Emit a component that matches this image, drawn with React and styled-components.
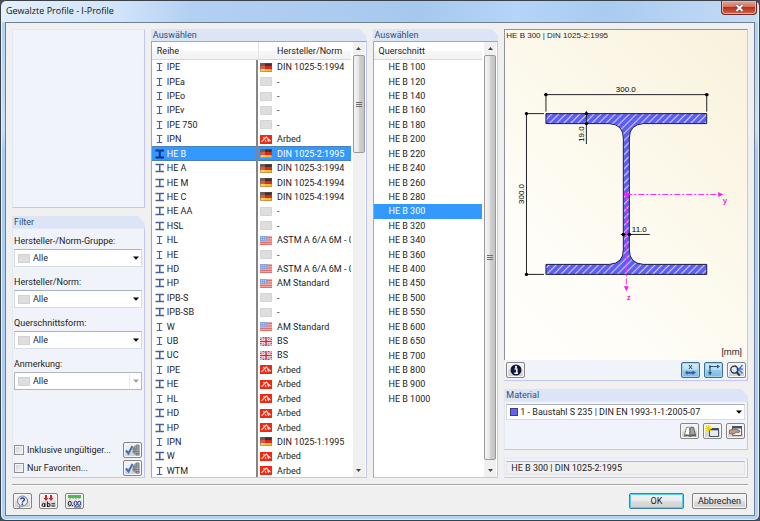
import React from "react";
import styled, { createGlobalStyle, css } from "styled-components";

const GlobalStyle = createGlobalStyle`
  *, *::before, *::after { box-sizing: border-box; }
  body { margin: 0; background: #474d55; }
  body, button, select, input, table {
    font-family: Roboto, "Liberation Sans", sans-serif;
    font-size: 9px;
    line-height: 12px;
    color: #1b1b1b;
  }
`;

/* ---------- window frame ---------- */

const Window = styled.div`
  display: flex;
  flex-direction: column;
  height: 100vh;
  min-height: 480px;
  padding: 0 4px 4px;
  border: 1px solid #3b4148;
  border-radius: 6px;
  background: linear-gradient(180deg, #c3dcf6 0, #b4d2f3 28px, #c8e0fa 130px, #a9cdf3 150px, #b2d3f6 100%);
  box-shadow: inset 0 0 0 1px #e3f0fc;
`;

const TitleBar = styled.header`
  display: flex;
  flex: none;
  justify-content: space-between;
  align-items: flex-start;
  height: 21px;
  margin: 0 -3px;
  padding: 0 1px 0 4px;
  background: linear-gradient(90deg, #e4f0fc 0, #cfe3f9 16%, #b3d0f2 25%, #a7c8ee 55%, #b4d5f8 68%, #a9cbf0 80%, #c5dcf5 100%);
  border-radius: 5px 5px 0 0;
`;

const Title = styled.h1`
  margin: 0;
  font: 9px/20px "Open Sans", "Noto Sans", sans-serif;
  color: #111;
`;

const CloseButton = styled.button`
  display: grid;
  place-items: center;
  width: 36px;
  height: 14px;
  padding: 0;
  border: 1px solid #6b2a2a;
  border-top: 0;
  border-radius: 0 0 4px 4px;
  background: linear-gradient(#e3a396 0, #d4705f 46%, #b8301c 50%, #d2644a 100%);
  box-shadow: inset 0 0 0 1px #eab5aa;
`;

const Client = styled.div`
  display: flex;
  flex: 1;
  flex-direction: column;
  min-height: 0;
  padding: 6px;
  border: 1px solid #6f7f92;
  background: #f0f0f0;
`;

const Columns = styled.main`
  display: grid;
  flex: 1;
  grid-template-columns: minmax(0, 133fr) minmax(0, 216fr) minmax(0, 126fr) minmax(0, 244fr);
  gap: 6px;
  min-height: 0;
`;

const Column = styled.div`
  display: flex;
  flex-direction: column;
  gap: 8px;
  min-width: 0;
  min-height: 0;
`;

/* ---------- grouped panels ---------- */

const Panel = styled.section`
  display: flex;
  flex-direction: column;
  flex: ${(p) => p.$flex || "none"};
  min-height: 0;
`;

const PanelHeader = styled.h2`
  flex: none;
  margin: 0;
  height: 12px;
  padding: 0 2px;
  font-size: 9px;
  font-weight: 400;
  line-height: 12px;
  color: #2f4f78;
  background: #dbe5f5;
  clip-path: polygon(0 0, calc(100% - 7px) 0, 100% 7px, 100% 100%, 0 100%);
`;

const PanelBody = styled.div`
  display: flex;
  flex: 1;
  flex-direction: column;
  min-height: 0;
  padding: ${(p) => p.$pad || "0"};
  border: 1px solid #e2e8f6;
  border-right: 1px solid #c3c5f6;
  border-bottom: 1px solid #c3c5f6;
  background: #f0f3f9;
`;

/* ---------- controls ---------- */

const FieldLabel = styled.label`
  display: block;
  margin: ${(p) => (p.$first ? 6 : 9)}px 0 2px;
`;

const SelectBox = styled.div`
  display: flex;
  flex: none;
  align-items: center;
  gap: ${(p) => (p.$tight ? 2 : 3)}px;
  height: ${(p) => (p.$tight ? 16 : 18)}px;
  padding: 0 1px 0 3px;
  border: 1px solid #d9dde3;
  border-top-color: #adb2ba;
  background: #fff;
  ${(p) => p.$disabled && css`border-color: #b4b7bd;`}
`;

const NativeSelect = styled.select`
  flex: 1;
  min-width: 0;
  height: 100%;
  padding: 0;
  border: 0;
  outline: 0;
  background: transparent;
  appearance: none;
  opacity: 1;
  color: #1b1b1b;
  &:disabled { border-right: 1px solid #ececec; }
`;

const Swatch = styled.span`
  flex: none;
  width: ${(p) => (p.$color ? 8 : 12)}px;
  height: ${(p) => (p.$color ? 8 : 9)}px;
  border: 1px solid ${(p) => (p.$color ? "#3c3c8c" : "#d2d2d2")};
  background: ${(p) => p.$color || "#dedede"};
`;

const CheckRow = styled.div`
  display: flex;
  align-items: center;
  justify-content: space-between;
  margin-top: 2px;
`;

const CheckLabel = styled.label`
  display: flex;
  align-items: center;
  gap: 3px;
  white-space: nowrap;
`;

const CheckBox = styled.input`
  width: 10px;
  height: 10px;
  margin: 0;
  appearance: none;
  border: 1px solid #8e8f8f;
  background: linear-gradient(135deg, #cfd3d8, #f6f6f6);
  box-shadow: inset 0 0 0 1px #f4f4f4;
`;

const IconButton = styled.button`
  display: grid;
  flex: none;
  place-items: center;
  width: 19px;
  height: 16px;
  padding: 0;
  border: 1px solid #858585;
  border-radius: 2px;
  background: linear-gradient(#f4f4f4 0, #ebebeb 48%, #dcdcdc 52%, #d0d0d0 100%);
  box-shadow: inset 0 0 0 1px #f8f8f8;
  ${(p) => p.$active && css`
    border-color: #3f6f8d;
    background: linear-gradient(#d6ecf8 0, #b4ddf3 48%, #94cdec 52%, #79bbe0 100%);
    box-shadow: inset 0 0 0 1px #a9d3ea;
  `}
`;

const PushButton = styled.button`
  width: 55px;
  height: 16px;
  padding: 0;
  line-height: 12px;
  border: 1px solid #808080;
  border-radius: 2px;
  background: linear-gradient(#f3f3f3 0, #ebebeb 48%, #dddddd 52%, #cfcfcf 100%);
  box-shadow: inset 0 0 0 1px #f8f8f8;
  ${(p) => p.$default && css`
    border-color: #3c7fb1;
    box-shadow: inset 0 0 0 1px #4fd2f5;
  `}
`;

const ButtonRow = styled.div`
  display: flex;
  align-items: center;
  gap: ${(p) => p.$gap || 4}px;
`;

const Spread = styled.div`
  display: flex;
  justify-content: space-between;
  padding: 2px 1px 2px 2px;
`;

/* ---------- list views ---------- */

const ListView = styled.div`
  display: flex;
  flex: 1;
  min-height: 0;
  border-top: 1px solid #a5a8ad;
  border-left: 1px solid #a5a8ad;
  border-right: 1px solid #c3c5f6;
  border-bottom: 1px solid #c3c5f6;
  background: #fff;
`;

const ListViewport = styled.div`
  flex: 1;
  min-width: 0;
  min-height: 0;
  margin-right: 2px;
  overflow: hidden;
`;

const headerCell = css`
  height: 18px;
  border-bottom: 1px solid #d8d8d8;
  font-weight: 400;
  line-height: 19px;
  text-align: left;
  background: linear-gradient(#fff 0, #fff 50%, #f6f7f8 55%, #f1f2f4 100%);
`;

const SeriesTable = styled.table`
  display: block;
`;

const SeriesHead = styled.thead`
  display: block;
`;

const SeriesBody = styled.tbody`
  display: grid;
  grid-auto-rows: 1fr;
  height: 418px;
`;

const SeriesRow = styled.tr`
  display: grid;
  grid-template-columns: minmax(0, 107fr) minmax(0, 93fr);
  ${(p) => p.$selected && css`
    color: #fff;
    background: #3399ff;
    box-shadow: inset 0 1px 0 #4d80b0, inset 0 -1px 0 #4d80b0;
  `}
`;

const SeriesHeadCell = styled.th`
  ${headerCell}
  padding: 0 0 0 ${(p) => p.$indent}px;
  & + & { border-left: 1px solid #e3e4e6; }
`;

const SeriesCell = styled.td`
  display: flex;
  align-items: center;
  gap: ${(p) => (p.$norm ? 5 : 1)}px;
  min-width: 0;
  padding: 0 0 0 2px;
  white-space: nowrap;
  border-right: ${(p) => (p.$norm ? "0" : "2px solid #858585")};
`;

const SectionHeader = styled.div`
  ${headerCell}
  padding-left: 5px;
`;

const SectionList = styled.ul`
  display: grid;
  grid-auto-rows: 1fr;
  height: 346px;
  margin: 0;
  padding: 0;
  list-style: none;
`;

const SectionItem = styled.li`
  display: flex;
  align-items: center;
  padding-left: 15px;
  white-space: nowrap;
  ${(p) => p.$selected && css`
    color: #fff;
    background: #3399ff;
  `}
`;

const ScrollTrack = styled.div`
  display: grid;
  flex: none;
  grid-template-rows: 13px minmax(0, ${(p) => p.$size}fr) minmax(0, ${(p) => 100 - p.$size}fr) 13px;
  width: 12px;
  margin-right: 1px;
  background: #f0f0f0;
`;

const ScrollArrow = styled.button`
  display: grid;
  place-items: center;
  padding: 0;
  border: 0;
  background: transparent;
`;

const ScrollThumb = styled.div`
  display: grid;
  place-items: center;
  border: 1px solid #999;
  border-radius: 2px;
  background: linear-gradient(90deg, #f5f5f5 0, #e6e6e6 45%, #cfcfcf 55%, #c4c4c8 100%);
`;

/* ---------- preview ---------- */

const Preview = styled.figure`
  display: flex;
  flex: 1;
  flex-direction: column;
  min-height: 0;
  margin: 0;
  padding: 0 1px 2px;
  border-top: 1px solid #8f9298;
  border-left: 1px solid #8f9298;
  font-family: "Liberation Sans", Arial, sans-serif;
  font-size: 8px;
  background: linear-gradient(225deg, #f9f1dc 0, #fcf8ea 40%, #fefdf8 75%, #fffefb 100%);
`;

const PreviewTitle = styled.figcaption`
  flex: none;
`;

const Drawing = styled.svg`
  flex: 1;
  width: 100%;
  min-height: 0;
`;

const Unit = styled.div`
  flex: none;
  padding-right: 4px;
  text-align: right;
  font-family: Roboto, "Liberation Sans", sans-serif;
  font-size: 9px;
`;

const PreviewBody = styled(PanelBody)`
  border-top: 0;
  border-left: 0;
`;

const StatusField = styled.output`
  display: block;
  height: 14px;
  padding: 0 4px;
  border: 1px solid #e3e3e3;
  border-top-color: #b5b8bd;
  background: #f0f0f0;
`;

const Footer = styled.footer`
  display: flex;
  flex: none;
  justify-content: space-between;
  margin-top: 6px;
  padding: 8px 1px 0;
  border-top: 1px solid #a3a3a3;
  box-shadow: inset 0 1px 0 #fff;
`;

/* ---------- icons ---------- */

const Svg = styled.svg`
  display: block;
  flex: none;
`;

const Caret = ({ muted }) => (
  <Svg width="7" height="4" viewBox="0 0 7 4" aria-hidden="true">
    <path d="M0 0.5h6L3 3.7z" fill={muted ? "#a0a0a0" : "#000"} />
  </Svg>
);

const BeamIcon = ({ wide, selected }) => {
  const color = selected ? "#00339a" : "#4a5f98";
  return (
    <Svg width="12" height="10" viewBox="0 0 12 10" aria-hidden="true">
      {wide ? (
        <path d="M1.5 1.5h8.500M1.500 8.500h8.500M5.750 1v8" stroke={color} strokeWidth={selected ? 2 : 1.5} fill="none" />
      ) : (
        <path d="M2.800 1.500h5.400M2.800 8.500h5.400M5.500 1v8" stroke={color} strokeWidth="1.200" fill="none" />
      )}
    </Svg>
  );
};

const Flag = ({ kind }) => (
  <Svg width="12" height="9" viewBox="0 0 12 9" aria-hidden="true">
    {kind === "de" && (
      <>
        <path d="M0 0h12v3H0z" fill="#3c3431" />
        <path d="M0 3h12v3H0z" fill="#e0271a" />
        <path d="M0 6h12v3H0z" fill="#f2c22c" />
        <path d="M0 0h5v9H0z" fill="#fff" opacity=".22" />
        <path d="M.5.5h11v8H.5z" fill="none" stroke="#77594a" opacity=".4" />
      </>
    )}
    {kind === "us" && (
      <>
        <path d="M0 0h12v9H0z" fill="#f0a7a2" />
        <path d="M0 1.500h12M0 4h12M0 6.500h12M0 8.500h12" stroke="#e2706a" strokeWidth="1" />
        <path d="M0 0h7v5H0z" fill="#86a5de" />
        <path d="M1 1.500h5M1 3.500h5" stroke="#b8cbf0" strokeDasharray="1 1" />
      </>
    )}
    {kind === "gb" && (
      <>
        <path d="M0 0h12v9H0z" fill="#5465b4" />
        <path d="M0 0l12 9M12 0L0 9" stroke="#fff" strokeWidth="2" />
        <path d="M0 0l12 9M12 0L0 9" stroke="#d8414c" strokeWidth=".7" />
        <path d="M6 0v9M0 4.500h12" stroke="#fff" strokeWidth="3" />
        <path d="M6 0v9M0 4.500h12" stroke="#d62a38" strokeWidth="1.500" />
      </>
    )}
    {kind === "arbed" && (
      <>
        <path d="M0 0h12v9H0z" fill="#f02a12" />
        <path d="M1.500 7L5 3.200 6.500 2l1 1.300L10.500 6M4.500 3L3.200 2.400M5.300 4.800L6 7M7.500 4L8.700 6.800" stroke="#ffe6df" strokeWidth="1.100" fill="none" />
      </>
    )}
    {kind === "none" && <path d="M.5.5h11v8H.5z" fill="#dedede" stroke="#d4d4d4" />}
  </Svg>
);

const ClipIcon = () => (
  <Svg width="15" height="12" viewBox="0 0 15 12" aria-hidden="true">
    <path d="M1 6.500l2.500 3L7.500 2" stroke="#3f70bd" strokeWidth="2" fill="none" />
    <path d="M7.500 4L10.500 1v10l-3-2z" fill="#8f949b" />
    <path d="M11 1h3v10h-3z" fill="#b9bdc3" stroke="#62676e" strokeWidth=".8" />
    <path d="M8 5h6M8 7.500h6M11 3h3M11 9.500h3" stroke="#62676e" strokeWidth=".7" />
  </Svg>
);

const HelpIcon = () => (
  <Svg width="13" height="13" viewBox="0 0 13 13" aria-hidden="true">
    <circle cx="6.500" cy="6" r="5" fill="#edf0f4" stroke="#70767e" />
    <path d="M4 10l-1 2.500L7 11" fill="#d5d8dd" stroke="#70767e" strokeWidth=".7" />
    <path d="M4.400 4.400C5 2.400 8.500 2.500 8.300 4.600 8.200 6 6.400 6 6.400 7.600" stroke="#264aa0" strokeWidth="1.500" fill="none" />
    <circle cx="6.300" cy="9.200" r=".9" fill="#264aa0" />
  </Svg>
);

const RenameIcon = () => (
  <Svg width="15" height="13" viewBox="0 0 15 13" aria-hidden="true">
    <path d="M4 0h2v3h1.500L5 6 2.500 3H4zM9 0h2v3h1.500L10 6 7.500 3H9z" fill="#c9282d" />
    <path d="M3.800 8v4M6.500 6.500V12M10.500 8.800H14M10.500 11H14" stroke="#222" strokeWidth="1.100" />
    <ellipse cx="2.500" cy="10" rx="1.300" ry="1.600" fill="none" stroke="#222" />
    <ellipse cx="7.800" cy="10" rx="1.300" ry="1.600" fill="none" stroke="#222" />
  </Svg>
);

const DecimalsIcon = () => (
  <Svg width="15" height="13" viewBox="0 0 15 13" aria-hidden="true">
    <path d="M1 0h13v3H1z" fill="#51b94f" />
    <path d="M3 3v1.500M6 3v1M9 3v1.500M12 3v1" stroke="#35823a" strokeWidth=".7" />
    <ellipse cx="2.800" cy="8.500" rx="1.500" ry="2.300" fill="none" stroke="#222" />
    <circle cx="5.600" cy="10.600" r=".7" fill="#222" />
    <ellipse cx="8.600" cy="8.300" rx="1.500" ry="2.200" fill="none" stroke="#2b3f92" />
    <ellipse cx="12.200" cy="8.300" rx="1.500" ry="2.200" fill="none" stroke="#2b3f92" />
    <path d="M7 12h7" stroke="#2b3f92" />
  </Svg>
);

const InfoIcon = () => (
  <Svg width="12" height="12" viewBox="0 0 12 12" aria-hidden="true">
    <circle cx="6" cy="6" r="5.500" fill="#10173a" />
    <path d="M4.500 5h2.300v4M4.300 9.300h3.600" stroke="#fff" strokeWidth="1.500" fill="none" />
    <circle cx="6" cy="2.900" r="1.100" fill="#fff" />
  </Svg>
);

const DimensionIcon = () => (
  <Svg width="15" height="12" viewBox="0 0 15 12" aria-hidden="true">
    <path d="M6 1l3 4M9 1L6 5" stroke="#333" strokeWidth=".9" />
    <path d="M2 8.500L4.500 6.500v1.300h5V6.500L13 8.500l-3.500 2.500V9.700h-5V11z" fill="#3c5c9e" />
  </Svg>
);

const AxesIcon = () => (
  <Svg width="15" height="12" viewBox="0 0 15 12" aria-hidden="true">
    <path d="M4 9V2.500H12" stroke="#2f5288" strokeWidth="1.200" fill="none" />
    <path d="M2 8h4L4 11.500zM11 .5v4L14 2.500z" fill="#2f5288" />
    <path d="M3 1.500h2v2H3z" fill="#2f5288" />
  </Svg>
);

const ZoomAllIcon = () => (
  <Svg width="15" height="13" viewBox="0 0 15 13" aria-hidden="true">
    <path d="M6 1.500l7.500 8M13.500 1L7 9M7 5h7" stroke="#4f80d0" strokeWidth="1.700" />
    <circle cx="5.300" cy="5.600" r="3.500" fill="#dfe9f6" fillOpacity=".6" stroke="#26303e" strokeWidth="1.300" />
    <path d="M7.600 8l3.200 3.700" stroke="#26303e" strokeWidth="2" />
  </Svg>
);

const BookIcon = () => (
  <Svg width="14" height="11" viewBox="0 0 14 11" aria-hidden="true">
    <path d="M1.500 9L3.500 1.500q2-1 3.500.5v7.500q-2-1.500-5.500-.5z" fill="#fff" stroke="#666" strokeWidth=".8" />
    <path d="M7 2q1.500-1.500 3.500-.5L12.500 9Q9 8 7 9.500z" fill="#a5a6aa" stroke="#444" strokeWidth=".8" />
    <path d="M1 10q4-1 6 .3 3-1.300 6-.3" stroke="#4a3c31" strokeWidth="1" fill="none" />
  </Svg>
);

const NewIcon = () => (
  <Svg width="15" height="12" viewBox="0 0 15 12" aria-hidden="true">
    <path d="M4.500 3.500h9v8h-9z" fill="#e8eaee" stroke="#4a5462" />
    <path d="M4.500 3.500h9v1.800h-9z" fill="#38465e" />
    <path d="M3.500 0v7M0 3.500h7M1 1l5 5M6 1L1 6" stroke="#e4d51b" strokeWidth="1.100" />
  </Svg>
);

const EditIcon = () => (
  <Svg width="14" height="12" viewBox="0 0 14 12" aria-hidden="true">
    <path d="M3.500 1.500h9v9h-9z" fill="#eef0f4" stroke="#606a7a" />
    <path d="M3 1h10v2.500H3z" fill="#3f5270" />
    <path d="M0 5.500l4-1.500 4 .5 3 1.500-1 1.500-3-.3L5 9 0 8.500z" fill="#c69a7c" stroke="#654637" strokeWidth=".7" />
  </Svg>
);

/* ---------- data ---------- */

const SERIES = [
  ["IPE", "de", "DIN 1025-5:1994"],
  ["IPEa", "none", "-"],
  ["IPEo", "none", "-"],
  ["IPEv", "none", "-"],
  ["IPE 750", "none", "-"],
  ["IPN", "arbed", "Arbed"],
  ["HE B", "de", "DIN 1025-2:1995", true],
  ["HE A", "de", "DIN 1025-3:1994", true],
  ["HE M", "de", "DIN 1025-4:1994", true],
  ["HE C", "de", "DIN 1025-4:1994", true],
  ["HE AA", "none", "-", true],
  ["HSL", "none", "-", true],
  ["HL", "us", "ASTM A 6/A 6M - 0"],
  ["HE", "none", "-"],
  ["HD", "us", "ASTM A 6/A 6M - 0", true],
  ["HP", "us", "AM Standard", true],
  ["IPB-S", "none", "-", true],
  ["IPB-SB", "none", "-", true],
  ["W", "us", "AM Standard"],
  ["UB", "gb", "BS"],
  ["UC", "gb", "BS", true],
  ["IPE", "arbed", "Arbed"],
  ["HE", "arbed", "Arbed", true],
  ["HL", "arbed", "Arbed"],
  ["HD", "arbed", "Arbed", true],
  ["HP", "arbed", "Arbed", true],
  ["IPN", "de", "DIN 1025-1:1995"],
  ["W", "arbed", "Arbed", true],
  ["WTM", "arbed", "Arbed"],
];

const SECTIONS = [
  100, 120, 140, 160, 180, 200, 220, 240, 260, 280, 300, 320,
  340, 360, 400, 450, 500, 550, 600, 650, 700, 800, 900, 1000,
];

const FILTERS = [
  { id: "group", label: "Hersteller-/Norm-Gruppe:" },
  { id: "norm", label: "Hersteller/Norm:" },
  { id: "shape", label: "Querschnittsform:" },
  { id: "note", label: "Anmerkung:", disabled: true },
];

/* ---------- composed parts ---------- */

const FilterSpacer = styled.div`
  height: 50px;
`;

const MaterialActions = styled(ButtonRow)`
  justify-content: flex-end;
  margin-top: 3px;
`;

const ScrollBar = ({ size }) => (
  <ScrollTrack $size={size}>
    <ScrollArrow type="button" aria-label="Nach oben">
      <Svg width="5" height="3" viewBox="0 0 5 3"><path d="M0 3h5L2.500 0z" fill="#444" /></Svg>
    </ScrollArrow>
    <ScrollThumb>
      <Svg width="6" height="7" viewBox="0 0 6 7" aria-hidden="true">
        <path d="M0 1.500h6M0 3.500h6M0 5.500h6" stroke="#6d6d6d" />
      </Svg>
    </ScrollThumb>
    <span />
    <ScrollArrow type="button" aria-label="Nach unten">
      <Svg width="5" height="3" viewBox="0 0 5 3"><path d="M0 0h5L2.500 3z" fill="#444" /></Svg>
    </ScrollArrow>
  </ScrollTrack>
);

const FilterField = ({ id, label, disabled, first }) => (
  <>
    <FieldLabel htmlFor={id} $first={first}>{label}</FieldLabel>
    <SelectBox $disabled={disabled}>
      <Swatch />
      <NativeSelect id={id} disabled={disabled}>
        <option>Alle</option>
      </NativeSelect>
      <Caret muted={disabled} />
    </SelectBox>
  </>
);

const Check = ({ label }) => (
  <CheckRow>
    <CheckLabel>
      <CheckBox type="checkbox" />
      {label}
    </CheckLabel>
    <IconButton type="button" aria-label={`${label} bearbeiten`}><ClipIcon /></IconButton>
  </CheckRow>
);

const Dots = ({ points }) =>
  points.map(([x, y]) => <circle key={`${x}-${y}`} cx={x} cy={y} r="1.700" fill="#000" />);

const SectionDrawing = () => (
  <Drawing viewBox="0 0 240 302" role="img" aria-label="HE B 300">
    <defs>
      <pattern id="hatch" width="5" height="5" patternUnits="userSpaceOnUse" patternTransform="rotate(45)">
        <rect width="5" height="5" fill="#5c5cf5" />
        <path d="M2.500 0v5" stroke="#c9c9ff" strokeWidth="1.200" />
      </pattern>
    </defs>
    <path
      d="M40 70.500H201V80.500H137.500Q123.500 81.500 123.500 95V207Q123.500 220.500 137.500 221.500H201V231.500H40V221.500H103.500Q117.500 220.500 117.500 207V95Q117.500 81.500 103.500 80.500H40Z"
      fill="url(#hatch)"
      stroke="#1d1d3a"
    />
    <g stroke="#222" strokeWidth="1" fill="none">
      <path d="M38 51.500H203M40 50V68.500M201 50V68.500" />
      <path d="M20.500 69V233M19 70.500H38M19 231.500H38" />
      <path d="M80.500 68V101" />
      <path d="M115 191.500H144" />
    </g>
    <Dots points={[[40, 51.5], [201, 51.5], [20.5, 70.5], [20.5, 231.5], [80.5, 70.5], [80.5, 80.5], [117.5, 191.5], [123.5, 191.5]]} />
    <text x="120" y="49" textAnchor="middle">300.0</text>
    <text transform="translate(18 151) rotate(-90)" textAnchor="middle">300.0</text>
    <text transform="translate(78 91) rotate(-90)" textAnchor="middle">19.0</text>
    <text x="126" y="189">11.0</text>
    <g stroke="#ff2cf0" strokeDasharray="6 2 2 2">
      <path d="M120.500 151.500H212" />
      <path d="M120.500 151.500V244" />
    </g>
    <g fill="#ff1cf0">
      <circle cx="120.500" cy="151.500" r="2.200" />
      <path d="M212.500 149v5l5-2.500zM118 243.500h5l-2.500 5z" />
      <text x="217" y="160" fontWeight="700">y</text>
      <text x="121" y="257" fontWeight="700">z</text>
    </g>
  </Drawing>
);

export default function App() {
  return (
    <>
      <GlobalStyle />
      <Window>
        <TitleBar>
          <Title>Gewalzte Profile - I-Profile</Title>
          <CloseButton type="button" aria-label="Schließen">
            <Svg width="9" height="8" viewBox="0 0 9 8" aria-hidden="true">
              <path d="M1.500 1l6 6M7.500 1l-6 6" stroke="#5d3b3b" strokeWidth="3" />
              <path d="M1.500 1l6 6M7.500 1l-6 6" stroke="#fff" strokeWidth="1.900" />
            </Svg>
          </CloseButton>
        </TitleBar>

        <Client>
          <Columns>
            <Column>
              <Panel $flex="1">
                <PanelBody />
              </Panel>
              <Panel>
                <PanelHeader>Filter</PanelHeader>
                <PanelBody $pad="0 2px 1px 1px">
                  {FILTERS.map((filter, i) => (
                    <FilterField key={filter.id} {...filter} first={i === 0} />
                  ))}
                  <FilterSpacer />
                  <Check label="Inklusive ungültiger..." />
                  <Check label="Nur Favoriten..." />
                </PanelBody>
              </Panel>
            </Column>

            <Panel>
              <PanelHeader>Auswählen</PanelHeader>
              <ListView>
                <ListViewport>
                  <SeriesTable>
                    <SeriesHead>
                      <SeriesRow>
                        <SeriesHeadCell $indent={5}>Reihe</SeriesHeadCell>
                        <SeriesHeadCell $indent={18}>Hersteller/Norm</SeriesHeadCell>
                      </SeriesRow>
                    </SeriesHead>
                    <SeriesBody>
                      {SERIES.map(([name, flag, norm, wide], i) => (
                        <SeriesRow key={i} $selected={i === 6} aria-selected={i === 6}>
                          <SeriesCell>
                            <BeamIcon wide={wide} selected={i === 6} />
                            {name}
                          </SeriesCell>
                          <SeriesCell $norm>
                            <Flag kind={flag} />
                            {norm}
                          </SeriesCell>
                        </SeriesRow>
                      ))}
                    </SeriesBody>
                  </SeriesTable>
                </ListViewport>
                <ScrollBar size={24} />
              </ListView>
            </Panel>

            <Panel>
              <PanelHeader>Auswählen</PanelHeader>
              <ListView>
                <ListViewport>
                  <SectionHeader>Querschnitt</SectionHeader>
                  <SectionList role="listbox" aria-label="Querschnitt">
                    {SECTIONS.map((size) => (
                      <SectionItem key={size} role="option" $selected={size === 300} aria-selected={size === 300}>
                        {`HE B ${size}`}
                      </SectionItem>
                    ))}
                  </SectionList>
                </ListViewport>
                <ScrollBar size={99} />
              </ListView>
            </Panel>

            <Column>
              <Panel $flex="1">
                <PreviewBody>
                  <Preview>
                    <PreviewTitle>HE B 300 | DIN 1025-2:1995</PreviewTitle>
                    <SectionDrawing />
                    <Unit>[mm]</Unit>
                  </Preview>
                  <Spread>
                    <IconButton type="button" aria-label="Info"><InfoIcon /></IconButton>
                    <ButtonRow>
                      <IconButton type="button" $active aria-label="Bemaßung"><DimensionIcon /></IconButton>
                      <IconButton type="button" $active aria-label="Achsen"><AxesIcon /></IconButton>
                      <IconButton type="button" aria-label="Alles anzeigen"><ZoomAllIcon /></IconButton>
                    </ButtonRow>
                  </Spread>
                </PreviewBody>
              </Panel>

              <Panel>
                <PanelHeader>Material</PanelHeader>
                <PanelBody $pad="2px 2px 10px 1px">
                  <SelectBox $tight>
                    <Swatch $color="#6464f4" />
                    <NativeSelect aria-label="Material">
                      <option>1 - Baustahl S 235 | DIN EN 1993-1-1:2005-07</option>
                    </NativeSelect>
                    <Caret />
                  </SelectBox>
                  <MaterialActions>
                    <IconButton type="button" aria-label="Bibliothek"><BookIcon /></IconButton>
                    <IconButton type="button" aria-label="Neu"><NewIcon /></IconButton>
                    <IconButton type="button" aria-label="Bearbeiten"><EditIcon /></IconButton>
                  </MaterialActions>
                </PanelBody>
              </Panel>

              <Panel>
                <PanelBody $pad="2px 2px 2px 1px">
                  <StatusField>HE B 300 | DIN 1025-2:1995</StatusField>
                </PanelBody>
              </Panel>
            </Column>
          </Columns>

          <Footer>
            <ButtonRow $gap={7}>
              <IconButton type="button" aria-label="Hilfe"><HelpIcon /></IconButton>
              <IconButton type="button" aria-label="Bezeichnung"><RenameIcon /></IconButton>
              <IconButton type="button" aria-label="Einheiten"><DecimalsIcon /></IconButton>
            </ButtonRow>
            <ButtonRow $gap={8}>
              <PushButton type="submit" $default>OK</PushButton>
              <PushButton type="button">Abbrechen</PushButton>
            </ButtonRow>
          </Footer>
        </Client>
      </Window>
    </>
  );
}
